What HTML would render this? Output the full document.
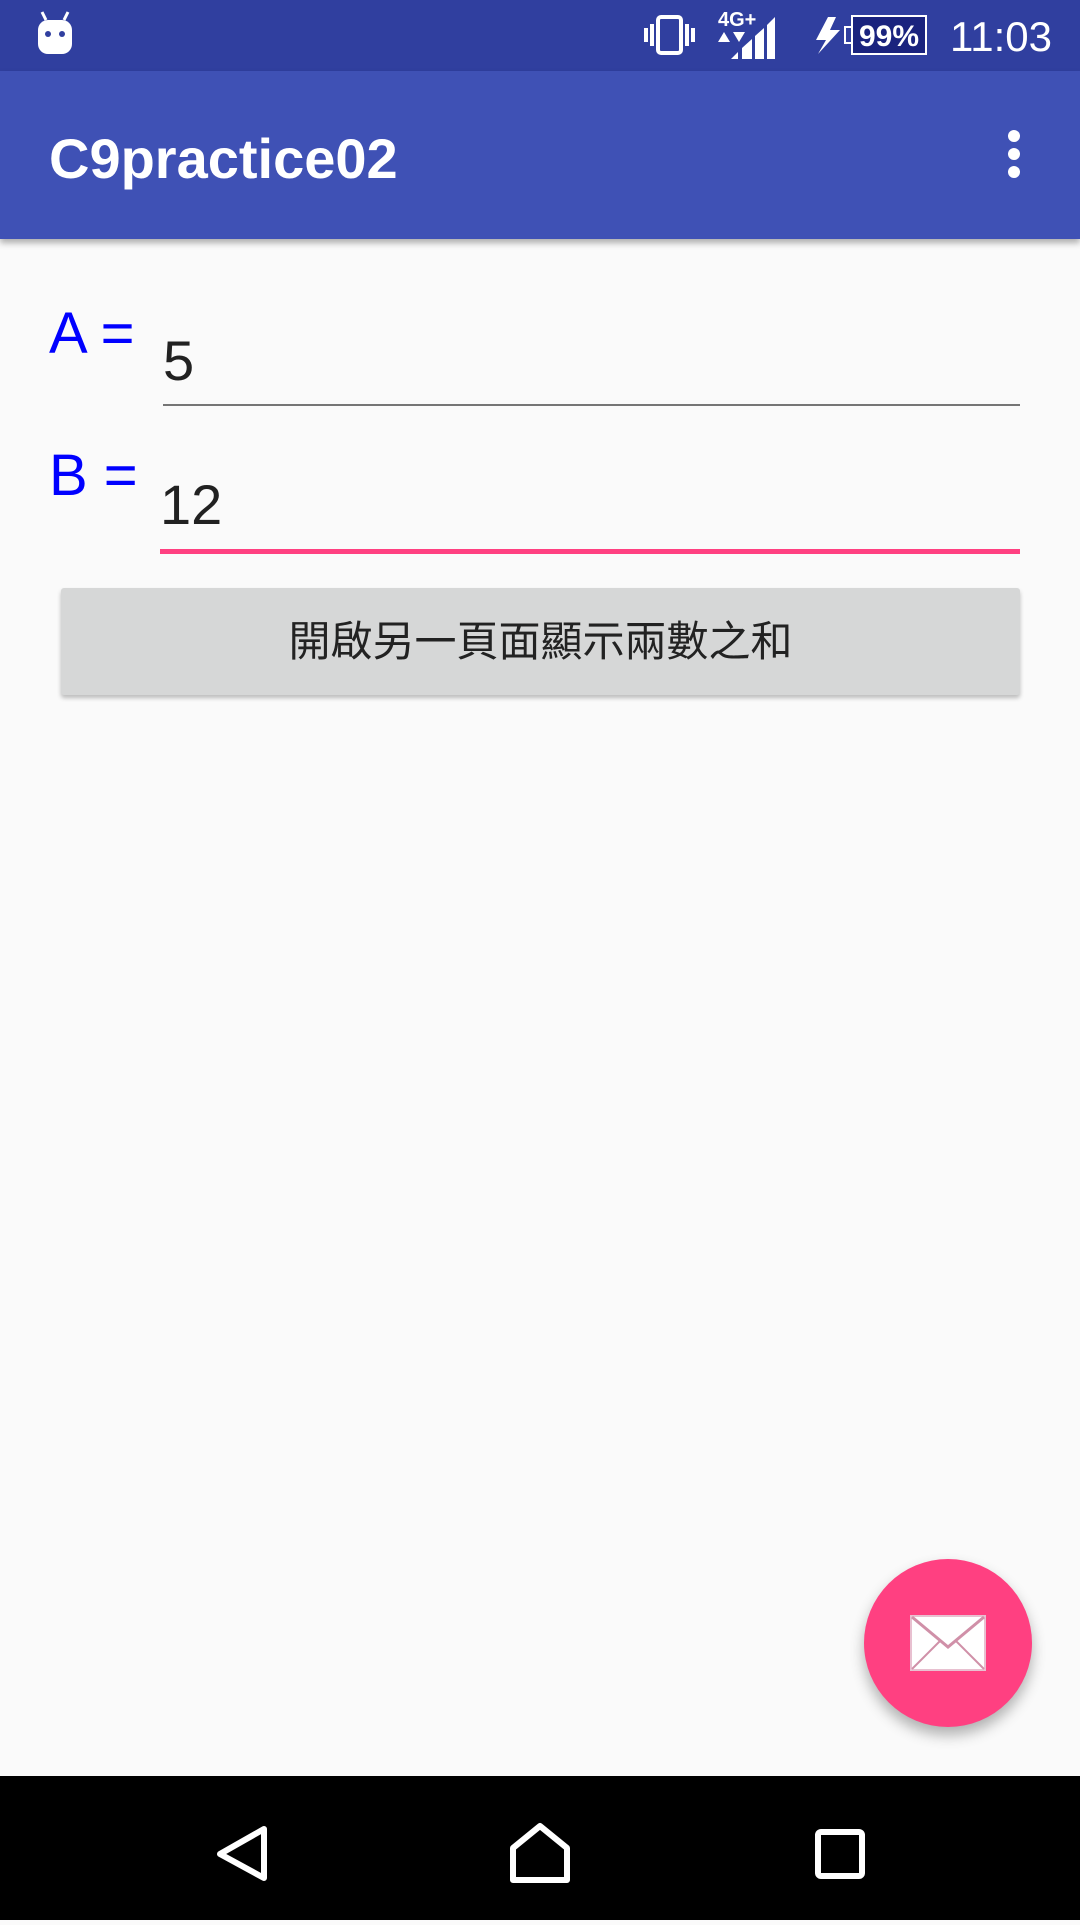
<!DOCTYPE html>
<html><head><meta charset="utf-8"><style>
*{margin:0;padding:0;box-sizing:border-box}
body{width:1080px;height:1920px;background:#FAFAFA;position:relative;overflow:hidden;font-family:"Liberation Sans","Noto Sans CJK TC",sans-serif}
.sb{position:absolute;left:0;top:0;width:1080px;height:71px;background:#303F9F}
.ab{position:absolute;left:0;top:71px;width:1080px;height:168px;background:#3F51B5;box-shadow:0 4px 6px rgba(0,0,0,.3)}
.title{position:absolute;left:49px;top:126px;color:#fff;font-size:56px;font-weight:bold}
.lbl{position:absolute;color:#0000FF;font-size:58px}
.val{position:absolute;color:#212121;font-size:56px}
.line{position:absolute;left:163px;width:857px}
.btn{position:absolute;left:61px;top:588px;width:959px;height:107px;background:#D6D7D7;border-radius:3px;box-shadow:0 3px 4px rgba(0,0,0,.25);text-align:center;line-height:107px;font-size:42px;color:#222}
.fab{position:absolute;left:864px;top:1559px;width:168px;height:168px;border-radius:50%;background:#FF4081;box-shadow:0 8px 14px rgba(0,0,0,.3)}
.nav{position:absolute;left:0;top:1776px;width:1080px;height:144px;background:#000}
</style></head><body>
<div class="sb">
<svg width="1080" height="71" style="position:absolute;left:0;top:0">
<rect x="38" y="20" width="34" height="34" rx="10" fill="#fff"/>
<line x1="42" y1="12" x2="46" y2="20" stroke="#fff" stroke-width="3"/><line x1="68" y1="12" x2="64" y2="20" stroke="#fff" stroke-width="3"/>
<circle cx="48" cy="34" r="3" fill="#303F9F"/><circle cx="62" cy="34" r="3" fill="#303F9F"/>
<rect x="658" y="17" width="23" height="36" rx="3" fill="none" stroke="#fff" stroke-width="4"/>
<rect x="644" y="28" width="4" height="14" fill="#fff"/><rect x="650" y="24" width="4" height="22" fill="#fff"/>
<rect x="685" y="24" width="4" height="22" fill="#fff"/><rect x="691" y="28" width="4" height="14" fill="#fff"/>
<text x="718" y="26" fill="#fff" font-size="20" font-weight="bold" font-family="Liberation Sans">4G+</text>
<polygon points="718,42 724,32 730,42" fill="#fff"/><polygon points="733,32 745,32 739,42" fill="#fff"/>
<polygon points="731,59 738,52 738,59" fill="#fff"/>
<polygon points="742,59 742,48 752,39 752,59" fill="#fff"/>
<polygon points="755,59 755,36 764,28 764,59" fill="#fff"/>
<polygon points="767,59 767,25 775,17 775,59" fill="#fff"/>
<polygon points="828,17 816,40 826,40 818,54 840,30 830,30 836,17" fill="#fff"/>
<rect x="852" y="16" width="74" height="38" fill="#1A237E" stroke="#fff" stroke-width="2"/>
<rect x="845" y="27" width="7" height="16" fill="none" stroke="#fff" stroke-width="2"/>
<text x="889" y="46" fill="#fff" font-size="30" font-weight="bold" text-anchor="middle" font-family="Liberation Sans">99%</text>
<text x="950" y="51" fill="#fff" font-size="42" font-family="Liberation Sans">11:03</text>
</svg></div>
<div class="ab"><svg width="20" height="60" style="position:absolute;left:1004px;top:57px"><circle cx="10" cy="8" r="6" fill="#fff"/><circle cx="10" cy="26" r="6" fill="#fff"/><circle cx="10" cy="44" r="6" fill="#fff"/></svg></div>
<div class="title">C9practice02</div>
<div class="lbl" style="left:49px;top:300px">A =</div>
<div class="val" style="left:163px;top:328px">5</div>
<div class="line" style="top:404px;height:2px;background:#757575"></div>
<div class="lbl" style="left:49px;top:442px">B =</div>
<div class="val" style="left:160px;top:472px">12</div>
<div class="line" style="left:160px;width:860px;top:549px;height:5px;background:#FF4081"></div>
<div class="btn">開啟另一頁面顯示兩數之和</div>
<div class="fab"><svg width="168" height="168"><rect x="47" y="57" width="74" height="54" fill="#fff" stroke="#e8c0d0" stroke-width="2"/><polyline points="48,58 84,88 120,58" fill="none" stroke="#d090a8" stroke-width="3"/><line x1="48" y1="110" x2="76" y2="82" stroke="#d090a8" stroke-width="2"/><line x1="120" y1="110" x2="92" y2="82" stroke="#d090a8" stroke-width="2"/></svg></div>
<div class="nav"><svg width="1080" height="144">
<polygon points="264,53 264,102 220,78" fill="none" stroke="#fff" stroke-width="6" stroke-linejoin="round"/>
<polygon points="540,50 567,72 567,104 513,104 513,72" fill="none" stroke="#fff" stroke-width="6" stroke-linejoin="round"/>
<rect x="818" y="56" width="44" height="44" rx="3" fill="none" stroke="#fff" stroke-width="6"/>
</svg></div>
</body></html>
